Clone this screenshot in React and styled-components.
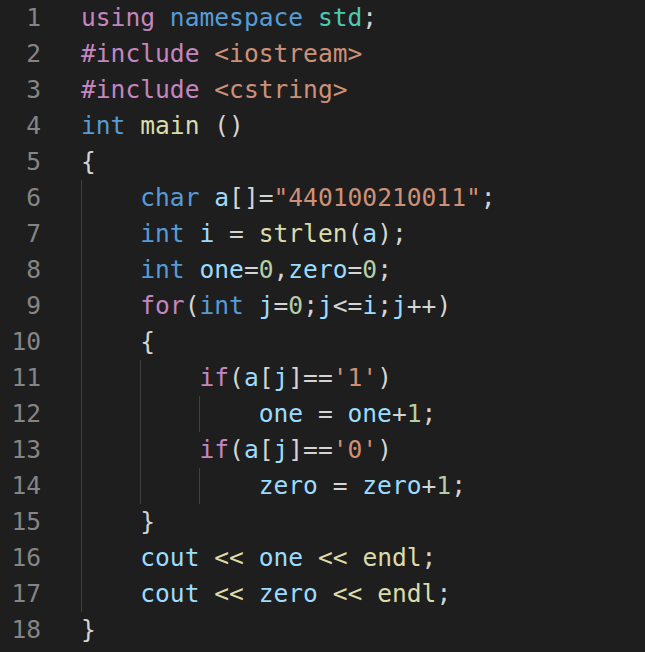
import React from 'react';
import styled, { createGlobalStyle } from 'styled-components';

const GlobalStyle = createGlobalStyle`
  html, body {
    margin: 0;
    padding: 0;
    background: #1e1e1e;
  }
`;

const COLORS = {
  kw: '#c586c0',
  type: '#569cd6',
  ns: '#4ec9b0',
  str: '#ce9178',
  fn: '#dcdcaa',
  var: '#9cdcfe',
  num: '#b5cea8',
  punc: '#d4d4d4',
};

const Editor = styled.div`
  background: #1e1e1e;
  width: 645px;
  height: 652px;
  overflow: hidden;
  font-family: "DejaVu Sans Mono", "Liberation Mono", monospace;
  font-size: 24.6px;
  line-height: 36px;
`;

const Row = styled.div`
  display: grid;
  grid-template-columns: 41px 1fr;
  column-gap: 40px;
  height: 36px;
`;

const LineNumber = styled.span`
  color: #858585;
  text-align: right;
  white-space: nowrap;
`;

const Code = styled.div`
  display: flex;
  white-space: pre;
  color: ${COLORS.punc};
`;

const Indent = styled.span`
  display: inline-block;
  width: 4ch;
  height: 36px;
  box-sizing: border-box;
  border-left: 1px solid ${({ $guide }) => ($guide ? '#404040' : 'transparent')};
`;

const Token = styled.span`
  color: ${({ $kind }) => COLORS[$kind] || COLORS.punc};
`;

// each line: indent level + [kind, text] tokens
const lines = [
  [0, [['kw', 'using'], ['punc', ' '], ['type', 'namespace'], ['punc', ' '], ['ns', 'std'], ['punc', ';']]],
  [0, [['kw', '#include'], ['punc', ' '], ['str', '<iostream>']]],
  [0, [['kw', '#include'], ['punc', ' '], ['str', '<cstring>']]],
  [0, [['type', 'int'], ['punc', ' '], ['fn', 'main'], ['punc', ' ()']]],
  [0, [['punc', '{']]],
  [1, [['type', 'char'], ['punc', ' '], ['var', 'a'], ['punc', '[]='], ['str', '"440100210011"'], ['punc', ';']]],
  [1, [['type', 'int'], ['punc', ' '], ['var', 'i'], ['punc', ' = '], ['fn', 'strlen'], ['punc', '('], ['var', 'a'], ['punc', ');']]],
  [1, [['type', 'int'], ['punc', ' '], ['var', 'one'], ['punc', '='], ['num', '0'], ['punc', ','], ['var', 'zero'], ['punc', '='], ['num', '0'], ['punc', ';']]],
  [1, [['kw', 'for'], ['punc', '('], ['type', 'int'], ['punc', ' '], ['var', 'j'], ['punc', '='], ['num', '0'], ['punc', ';'], ['var', 'j'], ['punc', '<='], ['var', 'i'], ['punc', ';'], ['var', 'j'], ['punc', '++)']]],
  [1, [['punc', '{']]],
  [2, [['kw', 'if'], ['punc', '('], ['var', 'a'], ['punc', '['], ['var', 'j'], ['punc', ']=='], ['str', "'1'"], ['punc', ')']]],
  [3, [['var', 'one'], ['punc', ' = '], ['var', 'one'], ['punc', '+'], ['num', '1'], ['punc', ';']]],
  [2, [['kw', 'if'], ['punc', '('], ['var', 'a'], ['punc', '['], ['var', 'j'], ['punc', ']=='], ['str', "'0'"], ['punc', ')']]],
  [3, [['var', 'zero'], ['punc', ' = '], ['var', 'zero'], ['punc', '+'], ['num', '1'], ['punc', ';']]],
  [1, [['punc', '}']]],
  [1, [['var', 'cout'], ['punc', ' '], ['fn', '<<'], ['punc', ' '], ['var', 'one'], ['punc', ' '], ['fn', '<<'], ['punc', ' '], ['fn', 'endl'], ['punc', ';']]],
  [1, [['var', 'cout'], ['punc', ' '], ['fn', '<<'], ['punc', ' '], ['var', 'zero'], ['punc', ' '], ['fn', '<<'], ['punc', ' '], ['fn', 'endl'], ['punc', ';']]],
  [0, [['punc', '}']]],
];

export default function App() {
  return (
    <>
      <GlobalStyle />
      <Editor>
        {lines.map(([level, tokens], n) => (
          <Row key={n}>
            <LineNumber>{n + 1}</LineNumber>
            <Code>
              {Array.from({ length: level }, (_, k) => (
                <Indent key={k} $guide />
              ))}
              <span>
                {tokens.map(([kind, text], t) => (
                  <Token key={t} $kind={kind}>{text}</Token>
                ))}
              </span>
            </Code>
          </Row>
        ))}
      </Editor>
    </>
  );
}
